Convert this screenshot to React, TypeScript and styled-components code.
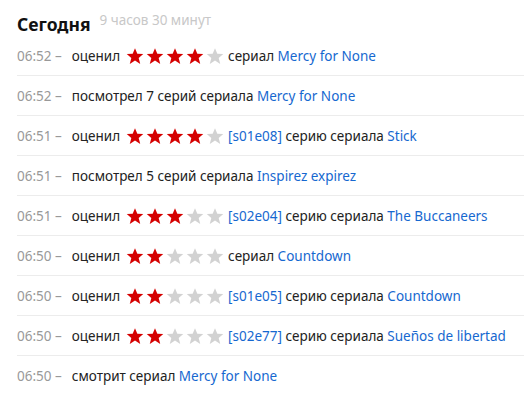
import React from "react";
import styled, { createGlobalStyle } from "styled-components";

const Global = createGlobalStyle`
  body {
    margin: 0;
    background: #fff;
    font-family: "Noto Sans", "Open Sans", sans-serif;
    -webkit-font-smoothing: antialiased;
  }
`;

const Page = styled.div`
  padding-left: 17px;
`;

const Header = styled.div`
  display: flex;
  align-items: flex-start;
  height: 36px;
  padding-top: 13px;
  box-sizing: border-box;
`;

const Title = styled.h1`
  margin: 0;
  font-size: 17.5px;
  line-height: 22px;
  font-weight: 700;
  color: #111;
`;

const Subtitle = styled.span`
  margin-left: 9px;
  margin-top: -1px;
  font-size: 13.5px;
  line-height: 16px;
  color: #c8c8c8;
`;

const List = styled.ul`
  margin: 0;
  padding: 0;
  list-style: none;
`;

const Row = styled.li`
  display: flex;
  align-items: center;
  height: 39px;
  border-bottom: 1px solid #ececec;
  font-size: 13.5px;
  color: #222;
  white-space: nowrap;

  &:last-child {
    border-bottom: none;
  }
`;

const Time = styled.span`
  color: #999;
  margin-right: 10px;
`;

const Link = styled.a`
  color: #1668d0;
  text-decoration: none;
  cursor: pointer;
`;

const Stars = styled.span`
  display: inline-flex;
  gap: 2px;
  margin: 0 4px 0 6px;
`;

const StarSvg = styled.svg<{ $on: boolean }>`
  width: 18px;
  height: 18px;
  fill: ${({ $on }) => ($on ? "#d50000" : "#d2d2d2")};
  display: block;
`;

function Star({ on }: { on: boolean }) {
  return (
    <StarSvg $on={on} viewBox="0 0 24 24">
      <polygon points="12,1.5 15.1,9 23,9.4 16.9,14.5 19,22.5 12,18 5,22.5 7.1,14.5 1,9.4 8.9,9" />
    </StarSvg>
  );
}

function Rating({ value }: { value: number }) {
  return (
    <Stars>
      {[0, 1, 2, 3, 4].map((i) => (
        <Star key={i} on={i < value} />
      ))}
    </Stars>
  );
}

type Item = {
  time: string;
  rating?: number;
  watched?: number;
  watching?: boolean;
  episode?: string;
  show: string;
};

const items: Item[] = [
  { time: "06:52", rating: 4, show: "Mercy for None" },
  { time: "06:52", watched: 7, show: "Mercy for None" },
  { time: "06:51", rating: 4, episode: "s01e08", show: "Stick" },
  { time: "06:51", watched: 5, show: "Inspirez expirez" },
  { time: "06:51", rating: 3, episode: "s02e04", show: "The Buccaneers" },
  { time: "06:50", rating: 2, show: "Countdown" },
  { time: "06:50", rating: 2, episode: "s01e05", show: "Countdown" },
  { time: "06:50", rating: 2, episode: "s02e77", show: "Sueños de libertad" },
  { time: "06:50", watching: true, show: "Mercy for None" },
];

function Entry({ item }: { item: Item }) {
  let body: React.ReactNode;
  if (item.watching) {
    body = <>смотрит сериал&nbsp;</>;
  } else if (item.watched) {
    body = <>посмотрел {item.watched} серий сериала&nbsp;</>;
  } else if (item.episode) {
    body = (
      <>
        оценил
        <Rating value={item.rating ?? 0} />
        <Link>[{item.episode}]</Link>&nbsp;серию сериала&nbsp;
      </>
    );
  } else {
    body = (
      <>
        оценил
        <Rating value={item.rating ?? 0} />
        сериал&nbsp;
      </>
    );
  }
  return (
    <Row>
      <Time>{item.time} –</Time>
      {body}
      <Link>{item.show}</Link>
    </Row>
  );
}

export default function App() {
  return (
    <Page>
      <Global />
      <Header>
        <Title>Сегодня</Title>
        <Subtitle>9 часов 30 минут</Subtitle>
      </Header>
      <List>
        {items.map((it, i) => (
          <Entry key={i} item={it} />
        ))}
      </List>
    </Page>
  );
}
